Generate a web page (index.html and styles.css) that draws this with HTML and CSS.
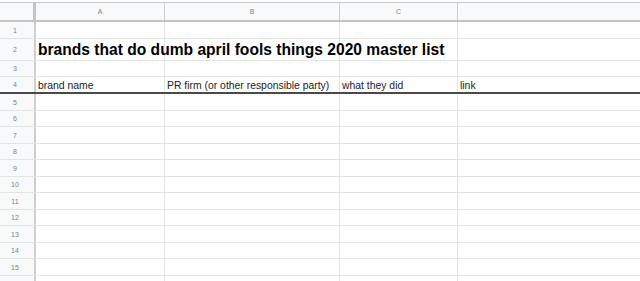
FILE: index.html
```html
<!DOCTYPE html>
<html>
<head>
<meta charset="utf-8">
<link rel="stylesheet" href="styles.css">
</head>
<body>
<div class="sheet">
  <div class="top"></div>
  <div class="row head">
    <div class="gut corner"></div>
    <div class="c a">A</div>
    <div class="c b">B</div>
    <div class="c cc">C</div>
    <div class="c d"></div>
  </div>
  <div class="row h17"><div class="gut">1</div><div class="c a"></div><div class="c b"></div><div class="c cc"></div><div class="c d"></div></div>
  <div class="row h22"><div class="gut">2</div><div class="c a title">brands that do dumb april fools things 2020 master list</div><div class="c b"></div><div class="c cc"></div><div class="c d"></div></div>
  <div class="row h16"><div class="gut">3</div><div class="c a"></div><div class="c b"></div><div class="c cc"></div><div class="c d"></div></div>
  <div class="row h17 thick"><div class="gut">4</div><div class="c a txt">brand name</div><div class="c b txt">PR firm (or other responsible party)</div><div class="c cc txt">what they did</div><div class="c d txt">link</div></div>
  <div class="row h17"><div class="gut">5</div><div class="c a"></div><div class="c b"></div><div class="c cc"></div><div class="c d"></div></div>
  <div class="row h16"><div class="gut">6</div><div class="c a"></div><div class="c b"></div><div class="c cc"></div><div class="c d"></div></div>
  <div class="row h17"><div class="gut">7</div><div class="c a"></div><div class="c b"></div><div class="c cc"></div><div class="c d"></div></div>
  <div class="row h16"><div class="gut">8</div><div class="c a"></div><div class="c b"></div><div class="c cc"></div><div class="c d"></div></div>
  <div class="row h17"><div class="gut">9</div><div class="c a"></div><div class="c b"></div><div class="c cc"></div><div class="c d"></div></div>
  <div class="row h16"><div class="gut">10</div><div class="c a"></div><div class="c b"></div><div class="c cc"></div><div class="c d"></div></div>
  <div class="row h17"><div class="gut">11</div><div class="c a"></div><div class="c b"></div><div class="c cc"></div><div class="c d"></div></div>
  <div class="row h16"><div class="gut">12</div><div class="c a"></div><div class="c b"></div><div class="c cc"></div><div class="c d"></div></div>
  <div class="row h17"><div class="gut">13</div><div class="c a"></div><div class="c b"></div><div class="c cc"></div><div class="c d"></div></div>
  <div class="row h16"><div class="gut">14</div><div class="c a"></div><div class="c b"></div><div class="c cc"></div><div class="c d"></div></div>
  <div class="row h17"><div class="gut">15</div><div class="c a"></div><div class="c b"></div><div class="c cc"></div><div class="c d"></div></div>
  <div class="row h17"><div class="gut"></div><div class="c a"></div><div class="c b"></div><div class="c cc"></div><div class="c d"></div></div>
</div>
</body>
</html>
```
FILE: styles.css
```css
html, body {
  margin: 0;
  padding: 0;
  background: #ffffff;
  overflow: hidden;
}
.sheet {
  width: 640px;
  height: 281px;
  overflow: hidden;
  font-family: "Liberation Sans", Arial, sans-serif;
  color: #000;
}
.top {
  height: 2px;
  background: #ffffff;
  border-bottom: 1px solid #c7c7c7;
}
.row {
  display: flex;
  box-sizing: border-box;
  border-bottom: 1px solid #e2e3e3;
  overflow: visible;
}
.row.head {
  height: 19px;
  background: #f8f9fa;
  border-bottom: 2px solid #c4c4c4;
}
.row.h17 { height: 17px; }
.row.h16 { height: 16px; }
.row.h22 { height: 22px; }
.row.thick { border-bottom: 2px solid #4a4a4a; }
.gut {
  box-sizing: border-box;
  width: 36px;
  flex: none;
  background: #f8f9fa;
  border-right: 2px solid #cfcfcf;
  color: #7d8186;
  font-size: 7px;
  display: flex;
  align-items: center;
  justify-content: center;
  padding-right: 4px;
}
.gut.corner {
  border-right: 3px solid #c4c4c4;
}
.c {
  box-sizing: border-box;
  flex: none;
  border-right: 1px solid #e2e3e3;
  display: flex;
  align-items: center;
  white-space: nowrap;
  overflow: visible;
  padding-left: 2px;
}
.head .c {
  justify-content: center;
  color: #7d8186;
  font-size: 7px;
  border-right-color: #cccccc;
  padding-left: 0;
}
.a { width: 129px; }
.b { width: 175px; }
.cc { width: 118px; }
.d { flex: 1; border-right: none; }
.title {
  font-weight: bold;
  font-size: 15.6px;
  position: relative;
  z-index: 1;
  padding-top: 1px;
}
.txt {
  font-size: 10.4px;
  color: #222;
  padding-top: 2px;
}
```
